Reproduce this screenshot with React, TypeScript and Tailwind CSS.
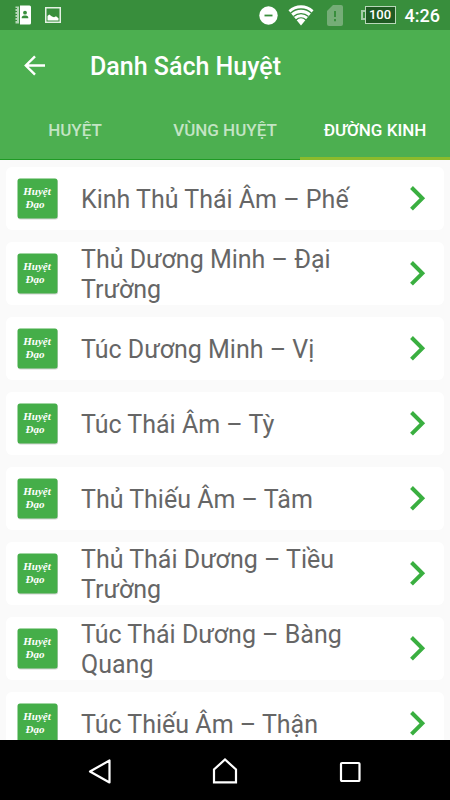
interface TabItem {
  label: string;
  active?: boolean;
}

const tabs: TabItem[] = [
  { label: "HUYỆT" },
  { label: "VÙNG HUYỆT" },
  { label: "ĐƯỜNG KINH", active: true },
];

const meridians = [
  "Kinh Thủ Thái Âm – Phế",
  "Thủ Dương Minh – Đại Trường",
  "Túc Dương Minh – Vị",
  "Túc Thái Âm – Tỳ",
  "Thủ Thiếu Âm – Tâm",
  "Thủ Thái Dương – Tiều Trường",
  "Túc Thái Dương – Bàng Quang",
  "Túc Thiếu Âm – Thận",
];

function StatusBar() {
  return (
    <div className="flex h-[30px] shrink-0 items-center justify-between bg-[#388e3c] pr-[10px] pl-[14px]">
      <div className="flex items-center gap-[13px]">
        {/* Contacts book */}
        <svg width="18" height="20" viewBox="0 0 18 20">
          <path d="M6 0.5h9.5a1.5 1.5 0 0 1 1.5 1.5v16a1.5 1.5 0 0 1-1.5 1.5H6z" fill="#fff" />
          <path d="M1.5 1.5h3.500v17h-3.500z" fill="#b5d6b7" />
          <path d="M0 3.5h3M0 6.5h3M0 9.5h3M0 12.5h3M0 15.5h3" stroke="#388e3c" strokeWidth="1.2" />
          <circle cx="11" cy="7.700" r="1.900" fill="#388e3c" />
          <path d="M7.700 13.200v-.8c0-1.200 1.700-1.800 3.300-1.800s3.300.6 3.300 1.800v.8z" fill="#388e3c" />
        </svg>
        {/* Screenshot saved */}
        <svg width="16" height="16" viewBox="0 0 16 16">
          <rect x="0.75" y="0.75" width="14.5" height="14.5" fill="none" stroke="#e4f1e4" strokeWidth="1.5" />
          <path d="M2.5 13.500V9l1.700-1.500L7 9.500l2 .7 2-1 2.500 2v2.300z" fill="#fff" />
        </svg>
      </div>
      <div className="flex items-center">
        <svg className="mr-[10px]" width="19" height="19" viewBox="0 0 19 19">
          <circle cx="9.5" cy="9.5" r="9.2" fill="#fff" />
          <path d="M5.5 9.5h8" stroke="#388e3c" strokeWidth="1.800" />
        </svg>
        {/* Wi-Fi fan, split into bands */}
        <svg className="mr-[13px]" width="26" height="22" viewBox="0 0 26 22" fill="none">
          <path d="M13 21.500L.5 6.200C7.500-.5 18.500-.5 25.500 6.200z" fill="#fff" />
          <g stroke="#388e3c" strokeWidth="1.300">
            <path d="M2.500 9.200C8.500 3.600 17.500 3.600 23.500 9.200" />
            <path d="M5.500 12.500C10 8.600 16 8.600 20.500 12.500" />
            <path d="M8 15.900C11 13.200 15 13.200 18 15.900" />
          </g>
        </svg>
        <svg className="mr-[18px]" width="16" height="21" viewBox="0 0 16 21">
          <path d="M6 0h8a2 2 0 0 1 2 2v17a2 2 0 0 1-2 2H2a2 2 0 0 1-2-2V6z" fill="#75ad77" />
          <path d="M8 6v6M8 14v2.300" stroke="#388e3c" strokeWidth="2" />
        </svg>
        <div className="mr-[9px] flex items-center">
          <span className="h-[10px] w-[4px] border-2 border-r-0 border-[#a5cba7]" />
          <span className="flex h-[18px] w-[31px] items-center justify-center border border-[#b9d8ba] bg-[#1f5a23] text-[13px] font-medium text-white">
            100
          </span>
        </div>
        <span className="text-[18px] font-medium text-white">4:26</span>
      </div>
    </div>
  );
}

function AppBar() {
  return (
    <header className="shrink-0 bg-[#4caf50]">
      <div className="flex h-[72px] items-center">
        <button type="button" aria-label="Back" className="ml-[24px] flex h-[24px] w-[22px] items-center">
          <svg width="22" height="22" viewBox="0 0 22 22" fill="none" stroke="#fff" strokeWidth="2.400">
            <path d="M21 10.500H3M11 1.300L1.800 10.500l9.200 9.200" />
          </svg>
        </button>
        <h1 className="ml-[44px] pt-[2px] text-[25px] font-medium text-white">Danh Sách Huyệt</h1>
      </div>
      <nav className="grid h-[58px] grid-cols-3">
        {tabs.map((tab) => (
          <button
            key={tab.label}
            type="button"
            className={
              tab.active
                ? "border-b-[3px] border-[#8bbb2c] pt-[2px] text-[17px] font-medium whitespace-nowrap text-white"
                : "border-b border-[#1f9a24] text-[17px] font-medium whitespace-nowrap text-[#c3e4c4]"
            }
          >
            {tab.label}
          </button>
        ))}
      </nav>
    </header>
  );
}

function Logo() {
  return (
    <svg className="shrink-0" width="41" height="42" viewBox="0 0 41 42">
      <rect x="1" y="1.500" width="40" height="40" rx="2.500" fill="#d2d2d2" />
      <rect x="0.500" y="0.500" width="40" height="40" rx="2.500" fill="#45ae49" />
      <g
        fill="#fff"
        fontFamily="'Liberation Serif', serif"
        fontStyle="italic"
        fontWeight="700"
        fontSize="11"
        textAnchor="middle"
      >
        <text x="20" y="17">Huyệt</text>
        <text x="18" y="30">Đạo</text>
      </g>
    </svg>
  );
}

function MeridianRow({ name }: { name: string }) {
  return (
    <li>
      <button type="button" className="flex h-[63px] w-full items-center rounded-md bg-white pr-[18px] pl-[11px] text-left">
        <Logo />
        <span className="ml-[23px] flex-1 pt-[2px] pr-[56px] text-[25px] leading-[30px] text-[#666]">{name}</span>
        <svg className="shrink-0" width="17" height="26" viewBox="0 0 17 26" fill="none">
          <path d="M2.500 1.500L13.300 12.300 2.500 23.100" stroke="#3aaf40" strokeWidth="4" />
        </svg>
      </button>
    </li>
  );
}

function NavigationBar() {
  return (
    <div className="grid h-[60px] shrink-0 grid-cols-[1fr_100px_1fr] items-center bg-black">
      <button type="button" aria-label="Back" className="mr-[62px] justify-self-end">
        <svg width="26" height="28" viewBox="0 0 26 28" fill="none" stroke="#fff" strokeWidth="2.200" strokeLinejoin="round">
          <path d="M22.500 4.500v22L3 15.500z" />
        </svg>
      </button>
      <button type="button" aria-label="Home" className="justify-self-center">
        <svg width="26" height="28" viewBox="0 0 26 28" fill="none" stroke="#fff" strokeWidth="2.200">
          <path d="M2 26.300V13.500L13 3.500l11 10v12.800z" />
        </svg>
      </button>
      <button type="button" aria-label="Recent apps" className="ml-[64px] justify-self-start">
        <svg width="22" height="24" viewBox="0 0 22 24" fill="none" stroke="#fff" strokeWidth="2.200">
          <rect x="2" y="5" width="18.500" height="18" rx="1" />
        </svg>
      </button>
    </div>
  );
}

export default function App() {
  return (
    <div className="flex h-screen flex-col bg-[#fafafa] font-['Roboto',sans-serif]">
      <StatusBar />
      <AppBar />
      <main className="min-h-0 flex-1 overflow-hidden px-[6px] pt-[7px]">
        <ul className="flex flex-col gap-3">
          {meridians.map((name) => (
            <MeridianRow key={name} name={name} />
          ))}
        </ul>
      </main>
      <NavigationBar />
    </div>
  );
}
